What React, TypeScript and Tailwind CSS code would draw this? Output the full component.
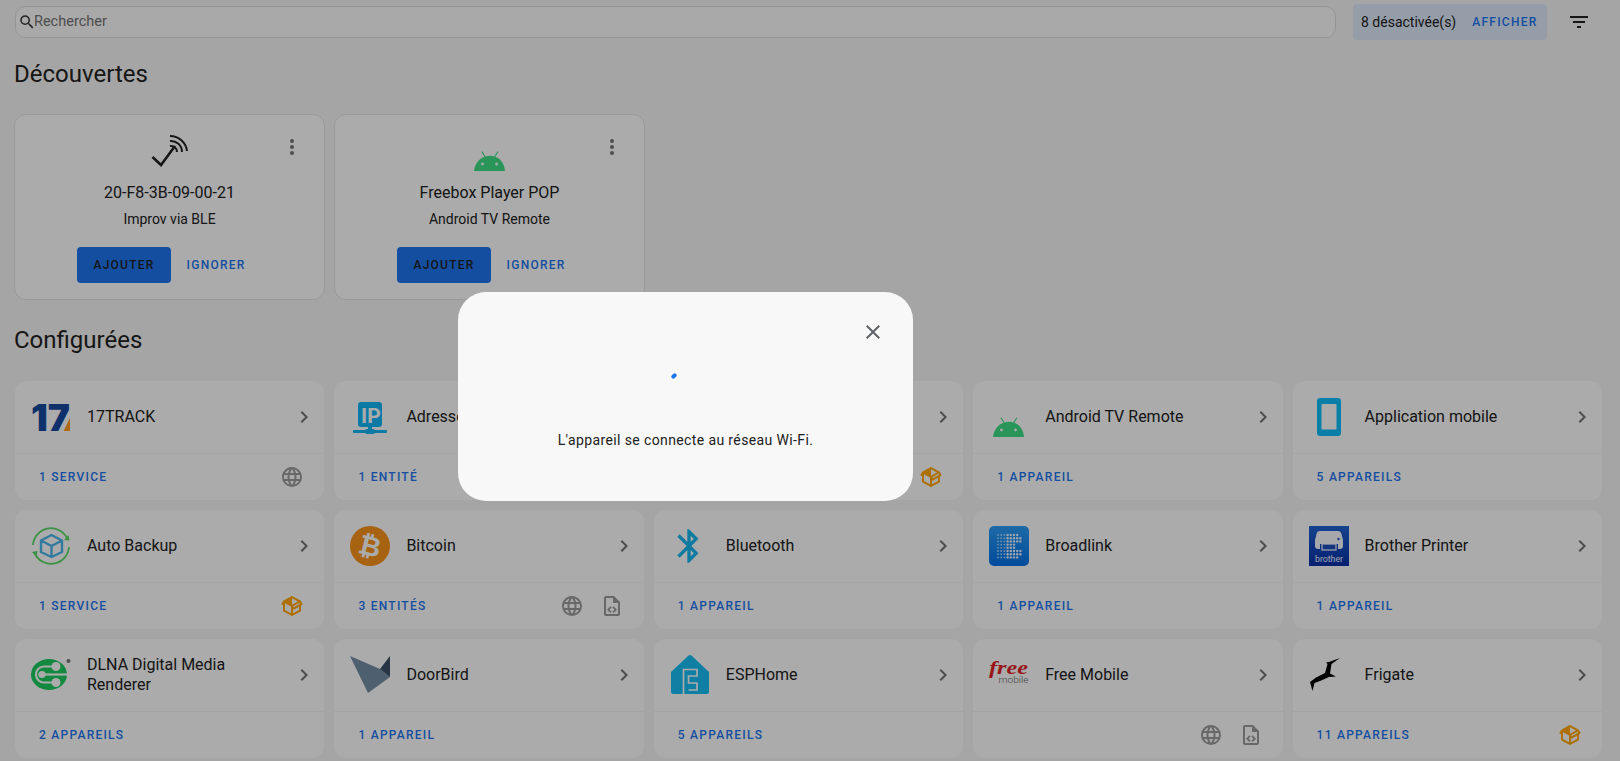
const mdi = {
  magnify: 'M9.5,3A6.5,6.5 0 0,1 16,9.5C16,11.11 15.41,12.59 14.44,13.73L14.71,14H15.5L20.5,19L19,20.5L14,15.5V14.71L13.73,14.44C12.59,15.41 11.11,16 9.5,16A6.5,6.5 0 0,1 3,9.5A6.5,6.5 0 0,1 9.5,3M9.5,5C7,5 5,7 5,9.5C5,12 7,14 9.5,14C12,14 14,12 14,9.5C14,7 12,5 9.5,5Z',
  filter: 'M6,13H18V11H6M3,6V8H21V6M10,18H14V16H10V18Z',
  dots: 'M12,16A2,2 0 0,1 14,18A2,2 0 0,1 12,20A2,2 0 0,1 10,18A2,2 0 0,1 12,16M12,10A2,2 0 0,1 14,12A2,2 0 0,1 12,14A2,2 0 0,1 10,12A2,2 0 0,1 12,10M12,4A2,2 0 0,1 14,6A2,2 0 0,1 12,8A2,2 0 0,1 10,6A2,2 0 0,1 12,4Z',
  chevron: 'M8.59,16.58L13.17,12L8.59,7.41L10,6L16,12L10,18L8.59,16.58Z',
  close: 'M19,6.41L17.59,5L12,10.59L6.41,5L5,6.41L10.59,12L5,17.59L6.41,19L12,13.41L17.59,19L19,17.59L13.41,12L19,6.41Z',
  web: 'M16.36,14C16.44,13.34 16.5,12.68 16.5,12C16.5,11.32 16.44,10.66 16.36,10H19.74C19.9,10.64 20,11.31 20,12C20,12.69 19.9,13.36 19.74,14M14.59,19.56C15.19,18.45 15.65,17.25 15.97,16H18.92C17.96,17.65 16.43,18.93 14.59,19.56M14.34,14H9.66C9.56,13.34 9.5,12.68 9.5,12C9.5,11.32 9.56,10.65 9.66,10H14.34C14.43,10.65 14.5,11.32 14.5,12C14.5,12.68 14.43,13.34 14.34,14M12,19.96C11.17,18.76 10.5,17.43 10.09,16H13.91C13.5,17.43 12.83,18.76 12,19.96M8,8H5.08C6.03,6.34 7.57,5.06 9.4,4.44C8.8,5.55 8.35,6.75 8,8M5.08,16H8C8.35,17.25 8.8,18.45 9.4,19.56C7.57,18.93 6.03,17.65 5.08,16M4.26,14C4.1,13.36 4,12.69 4,12C4,11.31 4.1,10.64 4.26,10H7.64C7.56,10.66 7.5,11.32 7.5,12C7.5,12.68 7.56,13.34 7.64,14M12,4.03C12.83,5.23 13.5,6.57 13.91,8H10.09C10.5,6.57 11.17,5.23 12,4.03M18.92,8H15.97C15.65,6.75 15.19,5.55 14.59,4.44C16.43,5.07 17.96,6.34 18.92,8M12,2C6.47,2 2,6.5 2,12A10,10 0 0,0 12,22A10,10 0 0,0 22,12A10,10 0 0,0 12,2Z',
  file: 'M14 2H6C4.89 2 4 2.89 4 4V20C4 21.11 4.89 22 6 22H18C19.11 22 20 21.11 20 20V8L14 2M18 20H6V4H13V9H18V20M9.54 15.65L11.63 17.74L10.35 19L7 15.65L10.35 12.3L11.63 13.56L9.54 15.65M17 15.65L13.65 19L12.38 17.74L14.47 15.65L12.38 13.56L13.65 12.3L17 15.65Z',
  pkg: 'M2,10.96C1.5,10.68 1.35,10.07 1.63,9.59L3.13,7C3.24,6.8 3.41,6.66 3.6,6.58L11.43,2.18C11.59,2.06 11.79,2 12,2C12.21,2 12.41,2.06 12.57,2.18L20.47,6.62C20.66,6.72 20.82,6.88 20.91,7.08L22.36,9.6C22.64,10.08 22.47,10.69 22,10.96L21,11.54V16.5C21,16.88 20.79,17.21 20.47,17.38L12.57,21.82C12.41,21.94 12.21,22 12,22C11.79,22 11.59,21.94 11.43,21.82L3.53,17.38C3.21,17.21 3,16.88 3,16.5V10.96C2.7,11.13 2.32,11.14 2,10.96M12,4.15V4.15L12,10.85V10.85L17.96,7.5L12,4.15M5,15.91L11,19.29V12.58L5,9.21V15.91M19,15.91V12.69L14,15.59C13.67,15.77 13.3,15.76 13,15.6V19.29L19,15.91M13.85,13.36L20.13,9.73L19.55,8.72L13.27,12.35L13.85,13.36Z',
  bluetooth: 'M14.88,16.29L13,18.17V14.41M13,5.83L14.88,7.71L13,9.58M17.71,7.71L12,2H11V9.58L6.41,5L5,6.41L10.59,12L5,17.58L6.41,19L11,14.41V22H12L17.71,16.29L13.41,12L17.71,7.71Z',
};

function Icon({ d, className }: { d: string; className?: string }) {
  return (
    <svg viewBox="0 0 24 24" className={className} fill="currentColor">
      <path d={d} />
    </svg>
  );
}

const Logo = ({ children }: { children: React.ReactNode }) => (
  <svg viewBox="0 0 40 40" className="w-10 h-10 shrink-0 overflow-visible">
    {children}
  </svg>
);

const Track17 = () => (
  <Logo>
    <text x="0" y="34" textLength="39" lengthAdjust="spacingAndGlyphs" fontFamily="Inter, sans-serif" fontWeight="900" fontSize="37" fill="#16499f">
      17
    </text>
    <polygon points="39,21 39,34 32.6,34" fill="#ff9c18" />
  </Logo>
);

const IpLogo = () => (
  <Logo>
    <rect x="8" y="5" width="24" height="25" rx="3" fill="#12b4f2" />
    <text x="11" y="26" fontFamily="Roboto, sans-serif" fontWeight="700" fontSize="21" fill="#fcfcfc">
      IP
    </text>
    <rect x="18" y="29" width="4" height="5" fill="#12b4f2" />
    <rect x="3" y="33" width="34" height="3" rx="1" fill="#12b4f2" />
    <rect x="15" y="32" width="10" height="5" rx="2" fill="#12b4f2" />
  </Logo>
);

const Android = () => (
  <Logo>
    <path d="M4 40C4.8 33 9 27.8 14.5 25.8L11.6 21.2C11.3 20.6 12.2 20.1 12.6 20.7L15.6 25.4C18.6 24.4 21.4 24.4 24.2 25.4L27.2 20.7C27.6 20.1 28.5 20.6 28.2 21.2L25.3 25.8C30.8 27.8 34.5 33 35 40Z" fill="#3ddc84" />
    <circle cx="12.5" cy="33" r="1.4" fill="#fcfcfc" />
    <circle cx="26.5" cy="33" r="1.4" fill="#fcfcfc" />
  </Logo>
);

const Improv = () => (
  <Logo>
    <path d="M2.5 26L11 34L25 15" fill="none" stroke="#222" strokeWidth="2.6" />
    <path d="M20 5A17 17 0 0 1 37 20" fill="none" stroke="#222" strokeWidth="2" />
    <path d="M20 10A11 11 0 0 1 32 21" fill="none" stroke="#222" strokeWidth="2" />
    <path d="M20 15A6 6 0 0 1 27 21" fill="none" stroke="#222" strokeWidth="2" />
  </Logo>
);

const MobileApp = () => (
  <Logo>
    <rect x="8" y="1" width="24" height="38" rx="3" fill="#10bdf8" />
    <rect x="12.5" y="7" width="15" height="25.5" rx="1" fill="#fcfcfc" />
  </Logo>
);

const AutoBackup = () => (
  <Logo>
    <path d="M2 19A18 18 0 0 1 36 12" fill="none" stroke="#58d863" strokeWidth="1.8" />
    <path d="M4 28A18 18 0 0 0 38 21" fill="none" stroke="#58d863" strokeWidth="1.8" />
    <polygon points="33,14 38.5,14.5 37.5,9" fill="#58d863" />
    <polygon points="1,26 6.5,25 5.5,31" fill="#58d863" />
    <path d="M20.5 9L31 14.5V26L20.5 31L10 26V14.5ZM10 14.5L20.5 20L31 14.5M20.5 20V31" fill="none" stroke="#4cb4ea" strokeWidth="2.4" strokeLinejoin="round" />
  </Logo>
);

const Bitcoin = () => (
  <Logo>
    <circle cx="20" cy="20" r="20" fill="#f7931a" />
    <text x="20" y="29.5" textAnchor="middle" transform="rotate(14 20 20)" fontFamily="'DejaVu Sans', sans-serif" fontWeight="700" fontSize="27" fill="#fcfcfc">
      ₿
    </text>
  </Logo>
);

const Bluetooth = () => (
  <Logo>
    <svg viewBox="0 0 24 24" x="-1" y="0" width="40" height="40">
      <path d={mdi.bluetooth} fill="#14b4ec" />
    </svg>
  </Logo>
);

const broadlinkDots = Array.from({ length: 8 }, (_, row) =>
  Array.from({ length: 8 }, (_, col) => ({ row, col })),
)
  .flat()
  .filter(({ row, col }) => !(col >= 6 && (row === 3 || row === 4 || (row === 0 && col === 7) || (row === 7 && col === 7))));

const Broadlink = () => (
  <Logo>
    <defs>
      <linearGradient id="bl" x1="0" y1="0" x2="0" y2="1">
        <stop offset="0" stopColor="#2c9cf5" />
        <stop offset="1" stopColor="#0270e6" />
      </linearGradient>
    </defs>
    <rect width="40" height="40" rx="5" fill="url(#bl)" />
    {broadlinkDots.map(({ row, col }) => (
      <circle key={`${row}-${col}`} cx={9 + col * 3.2} cy={9 + row * 3.2} r={col < 3 ? 0.9 : 1.2} fill="#e6f2ff" opacity={col < 3 ? 0.7 : 1} />
    ))}
  </Logo>
);

const Brother = () => (
  <Logo>
    <defs>
      <linearGradient id="br" x1="0" y1="0" x2="0" y2="1">
        <stop offset="0" stopColor="#1e63d2" />
        <stop offset="1" stopColor="#0a2fa8" />
      </linearGradient>
    </defs>
    <rect width="40" height="40" fill="url(#br)" />
    <path d="M11 5H29C31 5 32 6 32.5 8L34 14V20C34 22 33 23 31 23H29V18H11V23H9C7 23 6 22 6 20V14L7.5 8C8 6 9 5 11 5Z" fill="#f4f6fb" />
    <rect x="13" y="18" width="14" height="6" fill="#1e4eb8" stroke="#f4f6fb" strokeWidth="1.2" />
    <circle cx="29.5" cy="13" r="1.2" fill="#1e4eb8" />
    <text x="20" y="36" textAnchor="middle" textLength="28" lengthAdjust="spacingAndGlyphs" fontFamily="Roboto, sans-serif" fontSize="9.5" fill="#e8eefa">
      brother
    </text>
  </Logo>
);

const Dlna = () => (
  <Logo>
    <ellipse cx="18" cy="19.5" rx="18" ry="15.5" fill="#1bcb5d" />
    <path d="M25 11.5H13A8 8 0 0 0 13 27.5H25" fill="none" stroke="#fcfcfc" strokeWidth="2.2" />
    <path d="M12 19.5H36" fill="none" stroke="#fcfcfc" strokeWidth="2.2" />
    <circle cx="25" cy="11.5" r="4.5" fill="#fcfcfc" />
    <circle cx="25" cy="27.5" r="4.5" fill="#fcfcfc" />
    <circle cx="11" cy="19.5" r="3.6" fill="#fcfcfc" />
    <circle cx="37.5" cy="6" r="2" fill="#777" />
  </Logo>
);

const DoorBird = () => (
  <Logo>
    <polygon points="0,1 30,14 40,22 18,38" fill="#748ca5" />
    <polygon points="30,14 40,1 40,22" fill="#3b4e66" />
  </Logo>
);

const EspHome = () => (
  <Logo>
    <path d="M18.5 0.5C19.3 -0.2 20.7 -0.2 21.5 0.5L39 17V37C39 38 38 39 37 39H3C2 39 1 38 1 37V17Z" fill="#18bcf2" />
    <path d="M13.5 39V14.5H27V21H18.5V28H27V35H18.5" fill="none" stroke="#fcfcfc" strokeWidth="1.7" />
  </Logo>
);

const FreeMobile = () => (
  <Logo>
    <text x="0" y="19" textLength="39" lengthAdjust="spacingAndGlyphs" fontFamily="'Liberation Serif', serif" fontStyle="italic" fontWeight="700" fontSize="19" fill="#e01f26">
      free
    </text>
    <text x="9.5" y="28" textLength="30" lengthAdjust="spacingAndGlyphs" fontFamily="Roboto, sans-serif" fontWeight="300" fontSize="9" fill="#666">
      mobile
    </text>
  </Logo>
);

const Frigate = () => (
  <Logo>
    <path d="M31 3L20 7L17 7.5L18.5 9L16 18L7 22.5L1 27L3.5 36L5.5 28L11 26L20 22L27 21.5L21 18.5L22.5 9Z" fill="#000" />
  </Logo>
);

type CardData = {
  name: string;
  logo?: React.ReactNode;
  link?: string;
  icons?: ('web' | 'file' | 'pkg')[];
};

const cards: CardData[] = [
  { name: '17TRACK', logo: <Track17 />, link: '1 SERVICE', icons: ['web'] },
  { name: 'Adresse IP', logo: <IpLogo />, link: '1 ENTITÉ' },
  { name: '', icons: ['pkg'] },
  { name: 'Android TV Remote', logo: <Android />, link: '1 APPAREIL' },
  { name: 'Application mobile', logo: <MobileApp />, link: '5 APPAREILS' },
  { name: 'Auto Backup', logo: <AutoBackup />, link: '1 SERVICE', icons: ['pkg'] },
  { name: 'Bitcoin', logo: <Bitcoin />, link: '3 ENTITÉS', icons: ['web', 'file'] },
  { name: 'Bluetooth', logo: <Bluetooth />, link: '1 APPAREIL' },
  { name: 'Broadlink', logo: <Broadlink />, link: '1 APPAREIL' },
  { name: 'Brother Printer', logo: <Brother />, link: '1 APPAREIL' },
  { name: 'DLNA Digital Media Renderer', logo: <Dlna />, link: '2 APPAREILS' },
  { name: 'DoorBird', logo: <DoorBird />, link: '1 APPAREIL' },
  { name: 'ESPHome', logo: <EspHome />, link: '5 APPAREILS' },
  { name: 'Free Mobile', logo: <FreeMobile />, icons: ['web', 'file'] },
  { name: 'Frigate', logo: <Frigate />, link: '11 APPAREILS', icons: ['pkg'] },
];

function IntegrationCard({ card }: { card: CardData }) {
  return (
    <div className="h-[119px] rounded-xl bg-[#fcfcfc] flex flex-col">
      <div className="h-[73px] flex items-center pl-4 pr-2 border-b border-[#f3f3f3]">
        <div className="w-10 h-10 shrink-0">{card.logo}</div>
        <div className="ml-4 flex-1 text-base leading-5 text-[#212121]">{card.name}</div>
        <Icon d={mdi.chevron} className="w-6 h-6 text-[#727272]" />
      </div>
      <div className="h-[46px] flex items-center justify-between pl-6 pr-3">
        <span className="text-xs font-medium tracking-[1.25px] text-[#1c74ee]">{card.link}</span>
        <div className="flex">
          {card.icons?.map((i) => (
            <div key={i} className="w-10 h-10 flex items-center justify-center">
              <Icon d={mdi[i]} className={i === 'pkg' ? 'w-6 h-6 text-[#ffa600]' : 'w-6 h-6 text-[#9a9a9a]'} />
            </div>
          ))}
        </div>
      </div>
    </div>
  );
}

function DiscoveryCard({ logo, name, sub }: { logo: React.ReactNode; name: string; sub: string }) {
  return (
    <div className="relative w-[311px] h-[186px] rounded-xl bg-[#fcfcfc] border border-[#e2e2e2] flex flex-col items-center pt-4 text-[#212121]">
      {logo}
      <div className="mt-[10px] text-base leading-6">{name}</div>
      <div className="mt-1 text-sm leading-5">{sub}</div>
      <div className="mt-[18px] flex">
        <div className="h-9 px-4 rounded bg-[#1c74ee] flex items-center text-xs font-medium tracking-[1.25px] text-[#212121]">
          AJOUTER
        </div>
        <div className="h-9 px-4 flex items-center text-xs font-medium tracking-[1.25px] text-[#1c74ee]">IGNORER</div>
      </div>
      <Icon d={mdi.dots} className="absolute top-[20px] right-5 w-6 h-6 text-[#727272]" />
    </div>
  );
}

export default function App() {
  return (
    <div className="relative h-[761px] overflow-hidden bg-[#f4f4f4] font-['Roboto',sans-serif]">
      <div className="flex items-center pl-[15px] pr-[17px] pt-1">
        <div className="flex-1 h-8 rounded-[10px] border border-[#dcdcdc] bg-[#fafafa] flex items-center pl-[2px] pb-px">
          <Icon d={mdi.magnify} className="w-[18px] h-[18px] text-[#333]" />
          <span className="-ml-0.5 text-[14.5px] text-[#727272]">Rechercher</span>
        </div>
        <div className="ml-[17px] w-[194px] h-9 rounded bg-[#dbe8f8] flex items-center pl-2 text-sm text-[#212121]">
          <span>8 désactivée(s)</span>
          <span className="ml-4 text-xs font-medium tracking-[1.25px] text-[#1c74ee]">AFFICHER</span>
        </div>
        <div className="ml-2 w-12 flex justify-center">
          <Icon d={mdi.filter} className="w-6 h-6 text-[#212121]" />
        </div>
      </div>

      <h1 className="pl-[14px] mt-[18px] text-2xl leading-8 text-[#212121]">Découvertes</h1>
      <div className="pl-[14px] mt-6 flex gap-[9px]">
        <DiscoveryCard logo={<Improv />} name="20-F8-3B-09-00-21" sub="Improv via BLE" />
        <DiscoveryCard logo={<Android />} name="Freebox Player POP" sub="Android TV Remote" />
      </div>

      <h1 className="pl-[14px] mt-6 text-2xl leading-8 text-[#212121]">Configurées</h1>
      <div className="pl-[15px] pr-[18px] mt-[25px] grid grid-cols-5 gap-[10px]">
        {cards.map((c, i) => (
          <IntegrationCard key={i} card={c} />
        ))}
      </div>

      <div className="absolute inset-0 bg-black/32" />

      <div className="absolute left-[458px] top-[292px] w-[455px] h-[209px] rounded-[28px] bg-[#f8f8f8] flex flex-col items-center text-[#212121]">
        <Icon d={mdi.close} className="absolute top-[28px] right-[28px] w-6 h-6 text-[#5f6368]" />
        <div className="absolute top-[82px] left-[213px] w-[6px] h-[4px] rounded-full bg-[#1c74ee] -rotate-45" />
        <div className="mt-[138px] text-sm leading-5 tracking-[0.38px]">L'appareil se connecte au réseau Wi-Fi.</div>
      </div>
    </div>
  );
}
